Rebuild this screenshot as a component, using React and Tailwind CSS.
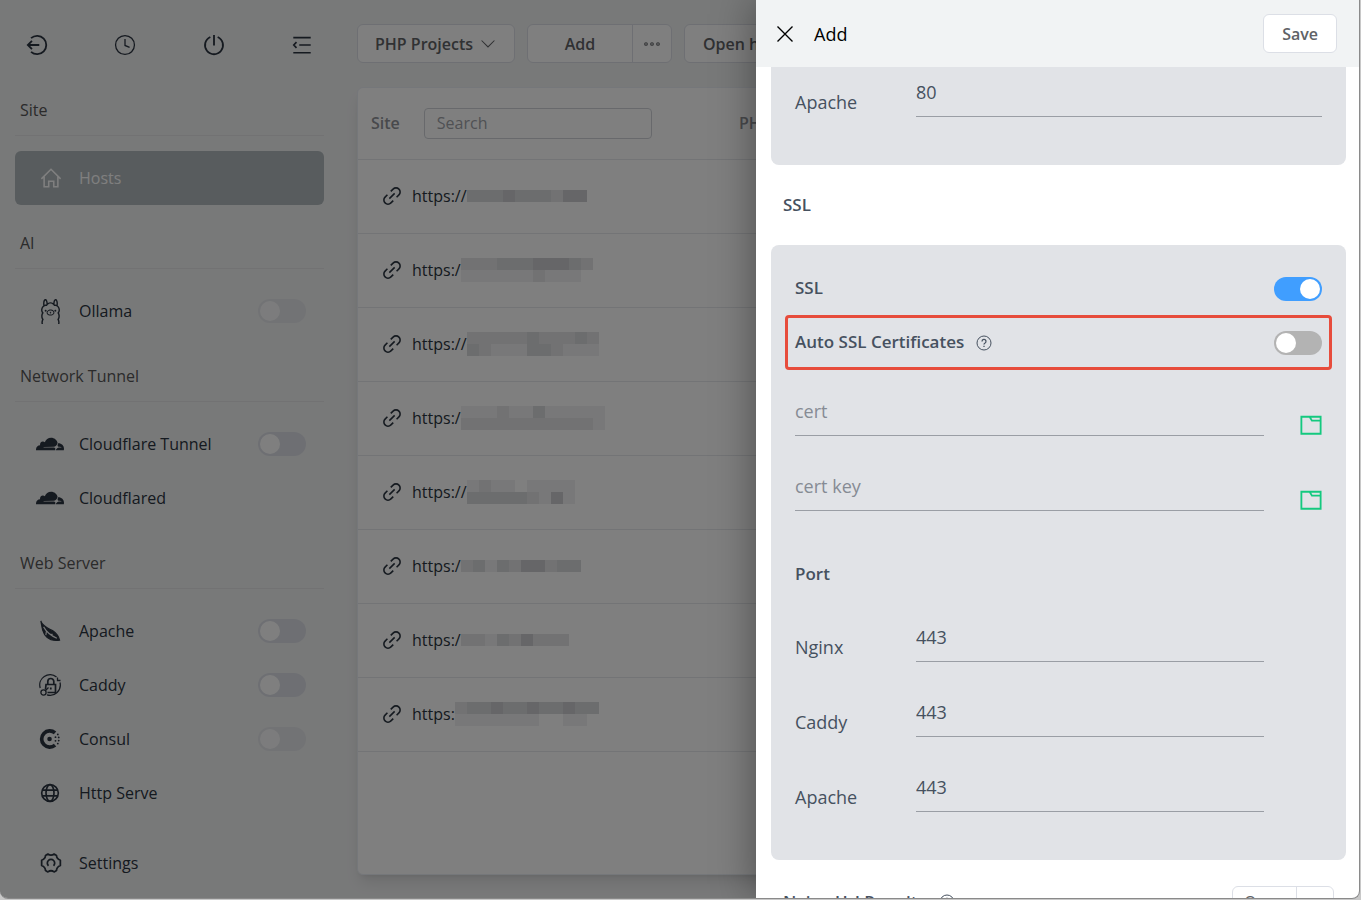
import { useState } from "react";
import { SiCloudflare, SiOllama } from "react-icons/si";

const Svg = ({ children, size = 22, stroke = 2, className = "" }) => (
    <svg
        width={size}
        height={size}
        viewBox="0 0 24 24"
        fill="none"
        stroke="currentColor"
        strokeWidth={stroke}
        className={className}
        aria-hidden="true"
    >
        {children}
    </svg>
);

const ExitIcon = () => (
    <Svg stroke={2}>
        <path d="M5.5 4.500A10 10 0 1 1 5.500 19.500" />
        <path d="M14.500 12H2M6.500 7.500 2 12l4.500 4.500" />
    </Svg>
);

const ClockIcon = () => (
    <Svg stroke={1.4}>
        <circle cx="12" cy="12" r="10.300" />
        <path d="M12 5.500v7l5 2" />
    </Svg>
);

const PowerIcon = () => (
    <Svg stroke={2}>
        <path d="M8 3.300a9.800 9.800 0 1 0 8 0M12 1v11.500" />
    </Svg>
);

const FoldIcon = () => (
    <Svg stroke={1.8}>
        <path d="M2.500 4h19M9 12h12.500M2.500 20.500h19M6 8.800 3 12l3 3.200" />
    </Svg>
);

const HomeIcon = () => (
    <Svg stroke={1.7}>
        <path d="M1.500 13 12 2.500 22.500 13M4.500 10.500V21.500h5V15.500h5.500v6h4.500v-11" />
    </Svg>
);

const FeatherIcon = () => (
    <Svg stroke={1.2}>
        <path
            d="M2 1l.8 4.500C3.500 12 6 19 13 21.500c3.500 1 6.500 1 9.500.500-1-4-3.500-7.500-7-10C11 9.500 6.500 8 3.500 4z"
            fill="currentColor"
        />
        <path d="M5 7.500c3 5.500 8 9.500 14.500 12.500M8 12.500l-.5 4M12 16l3-.5" className="stroke-[#f1f2f3]" />
    </Svg>
);

const CaddyIcon = () => (
    <Svg size={24} stroke={1.3}>
        <path d="M2.200 15A10.300 10.300 0 0 1 18.500 4M22 9.500A10.300 10.300 0 0 1 9 21.800" />
        <path d="M7.500 16.500 8 11.500h9.500v8H9.500M9.800 11.500V8.500a3 3 0 0 1 6 0v3M12.800 14.500v2" strokeWidth="1.700" />
        <circle cx="5.500" cy="19.500" r="2.600" />
        <path d="m7.500 17.500 3-3M19.500 4.500v3h3" />
    </Svg>
);

const ConsulIcon = () => (
    <Svg stroke={4}>
        <path d="M17.500 18.600A8.800 8.800 0 1 1 17.500 5.400" />
        <circle cx="11.500" cy="12" r="2.500" fill="currentColor" stroke="none" />
        <g fill="currentColor" stroke="none">
            <circle cx="18" cy="10" r="1" />
            <circle cx="18" cy="14" r="1" />
            <circle cx="20.500" cy="7" r="1" />
            <circle cx="21.500" cy="10.300" r="1" />
            <circle cx="21.500" cy="13.700" r="1" />
            <circle cx="20.500" cy="17" r="1" />
        </g>
    </Svg>
);

const GlobeIcon = () => (
    <Svg size={20} stroke={2}>
        <circle cx="12" cy="12" r="10" />
        <ellipse cx="12" cy="12" rx="4.800" ry="10" />
        <path d="M3 8.500h18M3 15.500h18" />
    </Svg>
);

const GearIcon = () => (
    <Svg stroke={1.9}>
        <path
            strokeLinejoin="round"
            d="M8.600 2.200 6 3.700Q6 7.200 1.800 9v5.800Q6 16.700 6 20.200l2.600 1.500Q12 19.200 15.400 21.700l2.600-1.500q0-3.500 4.200-5.400V9Q18 7.200 18 3.700l-2.600-1.500Q12 4.700 8.600 2.200z"
        />
        <path d="M9.300 15a4 4 0 1 1 5.400 0" />
    </Svg>
);

const LinkIcon = () => (
    <Svg size={20} stroke={1.9}>
        <path d="m10.500 6.500 2.800-2.800a4.600 4.600 0 0 1 7 7L17.500 13.500M13.500 17.500l-2.800 2.800a4.600 4.600 0 0 1-7-7l2.800-2.800M8.800 15.200l6.400-6.400" />
    </Svg>
);

const HelpIcon = () => (
    <Svg size={16} stroke={1.5}>
        <circle cx="12" cy="12" r="10.500" />
        <path d="M9 9.600a3 3 0 1 1 4.300 2.700c-.9.500-1.300 1-1.300 2M12 16.300v1.700" strokeWidth="1.900" />
    </Svg>
);

const FolderIcon = () => (
    <Svg stroke={2}>
        <path d="M1.500 3h21v18.500h-21zM10.500 3l2.500 4.200h9.500" />
    </Svg>
);

const ChevronIcon = () => (
    <Svg size={14} stroke={1.8}>
        <path d="m1 6 11 11L23 6" />
    </Svg>
);

const sections = [
    { title: "AI", items: [{ name: "Ollama", icon: <SiOllama size={25} />, toggle: "faded" }] },
    {
        title: "Network Tunnel",
        items: [
            { name: "Cloudflare Tunnel", icon: <SiCloudflare size={28} />, toggle: "normal" },
            { name: "Cloudflared", icon: <SiCloudflare size={28} /> },
        ],
    },
    {
        title: "Web Server",
        items: [
            { name: "Apache", icon: <FeatherIcon />, toggle: "normal" },
            { name: "Caddy", icon: <CaddyIcon />, toggle: "normal" },
            { name: "Consul", icon: <ConsulIcon />, toggle: "faded" },
            { name: "Http Serve", icon: <GlobeIcon /> },
        ],
    },
];

// Redacted part of each host: cells of 12px, one string per row, darker with a higher digit
const hosts = [
    { prefix: "https://", rows: ["3334333244"] },
    { prefix: "https:/", rows: ["22233344432", "11111121110"] },
    { prefix: "https://", rows: ["22222322232", "32111332111"] },
    { prefix: "https:/", rows: ["111211311111", "222222222221"] },
    { prefix: "https://", rows: ["121101111", "333332141"] },
    { prefix: "https:/", rows: ["2313244233"] },
    { prefix: "https:/", rows: ["221324222"] },
    { prefix: "https:", rows: ["233433433433", "111111100110"] },
];

const shades = ["bg-transparent", "bg-[#f0f0f2]", "bg-[#e4e5e7]", "bg-[#d8dadc]", "bg-[#cccdd1]"];

function Switch({ label, id, defaultChecked = false, look = "normal" }) {
    const track = {
        normal: "bg-[#dcdfe6]",
        faded: "bg-[#dcdfe6] opacity-60",
        strong: "bg-[#b3b3b3] checked:bg-[#409eff]",
    };
    return (
        <input
            type="checkbox"
            role="switch"
            id={id}
            aria-label={label}
            defaultChecked={defaultChecked}
            className={`h-6 w-12 shrink-0 cursor-pointer appearance-none rounded-full before:block before:size-5 before:translate-x-0.5 before:translate-y-0.5 before:rounded-full before:bg-white checked:before:translate-x-[26px] ${track[look]}`}
        />
    );
}

function SectionTitle({ children }) {
    return (
        <h2 className="ml-[15px] border-b border-[#e4e5e7] pb-[13px] pl-[5px] text-base leading-6 text-[#565656]">
            {children}
        </h2>
    );
}

function Sidebar() {
    return (
        <aside className="flex w-[324px] shrink-0 flex-col text-[#2b3440]">
            <div className="flex justify-between pt-[34px] pr-[11px] pl-[26px]">
                <button aria-label="Exit"><ExitIcon /></button>
                <button aria-label="History"><ClockIcon /></button>
                <button aria-label="Power"><PowerIcon /></button>
                <button aria-label="Collapse menu"><FoldIcon /></button>
            </div>

            <div className="mt-[42px]">
                <SectionTitle>Site</SectionTitle>
                <a
                    href="#hosts"
                    className="mt-[15px] ml-[15px] flex h-[54px] items-center rounded-md bg-[#b0b8bc] pl-[25px] text-white"
                >
                    <HomeIcon />
                    <span className="ml-[17px]">Hosts</span>
                </a>
            </div>

            {sections.map((section) => (
                <div key={section.title} className="mt-[26px]">
                    <SectionTitle>{section.title}</SectionTitle>
                    <ul className="mt-[15px]">
                        {section.items.map((item) => (
                            <li key={item.name} className="flex h-[54px] items-center pr-[18px] pl-[35px]">
                                <span className="flex w-[30px] justify-center">{item.icon}</span>
                                <a href="#service" className="ml-3.5 flex-1">{item.name}</a>
                                {item.toggle && <Switch label={item.name} look={item.toggle} />}
                            </li>
                        ))}
                    </ul>
                </div>
            ))}

            <a href="#settings" className="mt-4 flex h-[54px] items-center pl-10">
                <GearIcon />
                <span className="ml-[17px]">Settings</span>
            </a>
        </aside>
    );
}

function Redacted({ rows }) {
    return (
        <span className="flex flex-col">
            {rows.map((row, i) => (
                <span key={i} className="flex">
                    {row.split("").map((level, j) => (
                        <span key={j} className={`size-3 ${shades[level]}`} />
                    ))}
                </span>
            ))}
        </span>
    );
}

function HostList() {
    return (
        <main className="flex min-w-0 flex-1 flex-col pt-6 pb-[23px] pl-[33px]">
            <div className="flex gap-3 font-semibold text-[#606266]">
                <button className="flex h-[39px] w-[158px] shrink-0 items-center gap-2 rounded-md border border-[#dcdfe6] bg-white pl-[17px]">
                    PHP Projects
                    <ChevronIcon />
                </button>
                <div className="flex h-[39px] shrink-0 rounded-md border border-[#dcdfe6] bg-white">
                    <button className="w-[105px] border-r border-[#dcdfe6]">Add</button>
                    <button className="flex w-[38px] items-center justify-center" aria-label="More">
                        <Svg size={16} stroke={1.6}>
                            <circle cx="3" cy="12" r="2" />
                            <circle cx="12" cy="12" r="2" />
                            <circle cx="21" cy="12" r="2" />
                        </Svg>
                    </button>
                </div>
                <button className="h-[39px] shrink-0 rounded-md border border-[#dcdfe6] bg-white px-[18px]">
                    Open hosts
                </button>
            </div>

            <div className="mt-6 flex-1 overflow-hidden rounded-md border border-[#ebeef5] bg-white shadow-lg">
                <table className="w-full text-left">
                    <thead>
                        <tr className="h-[71px] border-b border-[#e6e8ec] text-[#909399]">
                            <th className="w-[367px] pl-[13px] font-semibold">
                                <label className="flex items-center gap-6">
                                    Site
                                    <input
                                        type="text"
                                        placeholder="Search"
                                        className="h-[31px] w-[228px] rounded border border-[#d0d3d9] px-3 font-normal placeholder:text-[#a0a3a9]"
                                    />
                                </label>
                            </th>
                            <th className="pl-3.5 font-semibold whitespace-nowrap">PHP Version</th>
                        </tr>
                    </thead>
                    <tbody className="text-[#2b3440]">
                        {hosts.map((host, i) => (
                            <tr key={i} className="h-[74px] border-b border-[#e6e8ec]">
                                <td className="pl-6">
                                    <div className="flex items-center">
                                        <LinkIcon />
                                        <a href="#host" className="ml-2.5">{host.prefix}</a>
                                        <Redacted rows={host.rows} />
                                    </div>
                                </td>
                                <td />
                            </tr>
                        ))}
                    </tbody>
                </table>
            </div>
        </main>
    );
}

function PortField({ name, value, id }) {
    return (
        <div className="flex items-end">
            <label htmlFor={id} className="w-[121px] leading-[30px]">{name}</label>
            <input
                id={id}
                defaultValue={value}
                className="h-[50px] min-w-0 flex-1 border-b border-[#9a9ea5] outline-none"
            />
        </div>
    );
}

function FileField({ name }) {
    return (
        <div className="flex items-end">
            <input
                aria-label={name}
                placeholder={name}
                className="h-[50px] min-w-0 flex-1 border-b border-[#9a9ea5] outline-none placeholder:text-[#868b94]"
            />
            <button type="button" className="ml-9 text-[#14c97f]" aria-label={`Choose ${name}`}>
                <FolderIcon />
            </button>
        </div>
    );
}

function AddDrawer({ onClose }) {
    return (
        <form
            className="absolute inset-y-0 right-0 flex w-[603px] flex-col overflow-hidden bg-white text-lg text-[#46515f] shadow-[0_0_40px_rgba(0,0,0,0.4)]"
            onSubmit={(e) => e.preventDefault()}
        >
            <header className="flex h-[67px] shrink-0 items-center bg-[#f1f3f4] pr-[22px] pl-5 text-black">
                <button type="button" onClick={onClose} aria-label="Close">
                    <Svg size={18} stroke={1.8}>
                        <path d="m2 2 20 20M22 2 2 22" />
                    </Svg>
                </button>
                <h1 className="ml-5 flex-1">Add</h1>
                <button className="h-[39px] rounded-md border border-[#dcdfe6] bg-white px-[18px] text-base font-semibold text-[#606266]">
                    Save
                </button>
            </header>

            <div className="min-h-0 flex-1 overflow-hidden pr-[13px] pl-[15px]">
                <section className="rounded-b-lg bg-[#e1e3e7] px-6 pb-12">
                    <PortField id="http-apache" name="Apache" value="80" />
                </section>

                <h2 className="flex h-20 items-center pl-3 text-[17px] font-semibold">SSL</h2>

                <section className="rounded-lg bg-[#e1e3e7] px-6 pt-[17px] pb-12">
                    <div className="flex h-[53px] items-center justify-between text-[17px] font-semibold">
                        <label htmlFor="ssl">SSL</label>
                        <Switch id="ssl" defaultChecked look="strong" />
                    </div>
                    <div className="-mx-2.5 flex h-[55px] items-center rounded-sm border-3 border-[#e74c3c] px-[7px] text-[17px] font-semibold">
                        <label htmlFor="auto-ssl">Auto SSL Certificates</label>
                        <span className="ml-3 flex flex-1"><HelpIcon /></span>
                        <Switch id="auto-ssl" look="strong" />
                    </div>

                    <div className="mt-4 flex flex-col gap-[25px]">
                        <FileField name="cert" />
                        <FileField name="cert key" />
                    </div>

                    <h3 className="mt-[50px] text-[17px] leading-[26px] font-semibold">Port</h3>
                    <div className="mt-[25px] flex flex-col gap-[25px] pr-[58px]">
                        <PortField id="ssl-nginx" name="Nginx" value="443" />
                        <PortField id="ssl-caddy" name="Caddy" value="443" />
                        <PortField id="ssl-apache" name="Apache" value="443" />
                    </div>
                </section>

                <div className="mt-[26px] flex h-8 items-center pr-3 pl-3">
                    <h2 className="text-[17px] font-semibold">Nginx Url Rewrite</h2>
                    <span className="ml-3 flex flex-1"><HelpIcon /></span>
                    <div className="flex h-8 rounded-md border border-[#dcdfe6] text-base text-[#606266]">
                        <button type="button" className="w-16 border-r border-[#dcdfe6]">Open</button>
                        <button type="button" className="flex w-9 items-center justify-center" aria-label="More options">
                            <ChevronIcon />
                        </button>
                    </div>
                </div>
            </div>
        </form>
    );
}

export default function App() {
    const [open, setOpen] = useState(true);

    return (
        <div className="h-screen bg-[#c8c8c8] pr-px pb-px font-['Open_Sans','Noto_Sans',sans-serif] text-base">
            <div className="relative flex h-full overflow-hidden rounded-b-lg border-r border-b border-[#8a8a8a] bg-[#f1f2f3]">
                <Sidebar />
                <HostList />
                {open && (
                    <>
                        <div className="absolute inset-0 bg-black/50" onClick={() => setOpen(false)} />
                        <AddDrawer onClose={() => setOpen(false)} />
                    </>
                )}
            </div>
        </div>
    );
}
